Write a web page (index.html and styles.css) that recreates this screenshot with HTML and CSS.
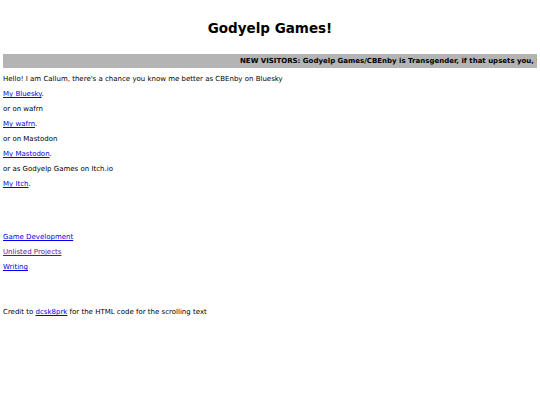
FILE: index.html
```html
<!DOCTYPE html>
<html lang="en">
<head>
    <meta charset="UTF-8">
    <meta name="viewport" content="width=device-width, initial-scale=1.0">
    <title>Godyelp Games!</title>
    <link rel="stylesheet" href="styles.css">
</head>
<body>
    <h1>Godyelp Games!</h1>

    <div class="scroller">
        <div class="scroller-text">NEW VISITORS: Godyelp Games/CBEnby is Transgender, if that upsets you, fuck off.</div>
    </div>

    <p>Hello! I am Callum, there's a chance you know me better as CBEnby on Bluesky</p>
    <p><a href="#">My Bluesky</a>.</p>
    <p>or on wafrn</p>
    <p><a href="#">My wafrn</a>.</p>
    <p>or on Mastodon</p>
    <p><a href="#">My Mastodon</a>.</p>
    <p>or as Godyelp Games on Itch.io</p>
    <p><a href="#">My Itch</a>.</p>

    <div class="links">
        <p><a href="#">Game Development</a></p>
        <p><a href="#" class="visited">Unlisted Projects</a></p>
        <p><a href="#">Writing</a></p>
    </div>

    <p class="credit">Credit to <a href="#">dcsk8prk</a> for the HTML code for the scrolling text</p>
</body>
</html>
```

FILE: styles.css
```css
body {
    font-family: "DejaVu Sans", Verdana, sans-serif;
    font-size: 7px;
    margin: 3px;
    color: #000;
    background-color: #fff;
}
h1 {
    text-align: center;
    font-size: 13.5px;
    margin: 17px 0 18px 0;
}
.scroller {
    background-color: #b4b4b4;
    height: 14px;
    overflow: hidden;
    white-space: nowrap;
    display: flex;
    align-items: center;
}
.scroller-text {
    font-size: 7px;
    font-weight: bold;
    padding-left: 237px;
}
p {
    margin: 7px 0;
    line-height: 8px;
}
a {
    color: #0000ee;
}
a.visited {
    color: #551a8b;
}
.links {
    margin-top: 45px;
}
.credit {
    margin-top: 37px;
}
```
